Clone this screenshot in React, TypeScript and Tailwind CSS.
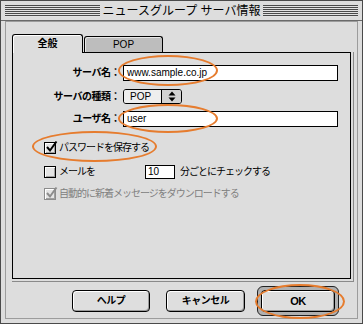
import React from 'react';

// Mac OS 8 風の「ニュースグループ サーバ情報」ダイアログ

const stripes =
  'flex-1 h-[12px] bg-[repeating-linear-gradient(to_bottom,#4a4a4a_0px,#4a4a4a_1px,#e2e2e2_1px,#e2e2e2_2px)]';

function CheckBox({ checked, disabled }: { checked?: boolean; disabled?: boolean }) {
  const stroke = disabled ? '#8c8c8c' : '#000';
  return (
    <span
      className={`relative shrink-0 w-[12px] h-[12px] border bg-[#e4e4e4] shadow-[inset_1px_1px_0_#fff,inset_-1px_-1px_0_#a0a0a0] ${
        disabled ? 'border-[#8c8c8c]' : 'border-black'
      }`}
    >
      {checked && (
        <svg className="absolute -top-[3px] left-[0px]" width="13" height="13" viewBox="0 0 13 13">
          <path d="M2 7 L5 10.5 L11.5 1.5" stroke={stroke} strokeWidth="2" fill="none" />
        </svg>
      )}
    </span>
  );
}

function Field({ label, children }: { label: string; children: React.ReactNode }) {
  return (
    <div className="flex items-center">
      <span className="w-[107px] text-right text-[10px] leading-none font-bold tracking-[-0.5px]">{label}</span>
      <div className="ml-[3px]">{children}</div>
    </div>
  );
}

function TextBox({ value }: { value: string }) {
  return (
    <div className="w-[215px] h-[16px] border border-black bg-white pl-[3px] flex items-center text-[10px] leading-none">
      {value}
    </div>
  );
}

function Button({ label, className = '' }: { label: string; className?: string }) {
  return (
    <div
      className={`h-[22px] border border-black rounded-[4px] bg-[#dedede] shadow-[inset_1px_1px_0_#fff,inset_-1px_-1px_0_#9a9a9a] flex items-center justify-center text-[10px] font-bold leading-none tracking-[-0.5px] ${className}`}
    >
      {label}
    </div>
  );
}

export default function App() {
  return (
    <div className="relative w-[363px] h-[324px] overflow-hidden bg-[#dddddd] border border-[#4a4a4a] flex flex-col text-black font-['Liberation_Sans','Noto_Sans_CJK_JP',sans-serif]">
      {/* タイトルバー */}
      <div className="shrink-0 h-[20px] flex items-center gap-[3px] px-[4px] border-b border-[#6a6a6a]">
        <div className={stripes} />
        <span className="text-[12px] leading-none">ニュースグループ サーバ情報</span>
        <div className={stripes} />
      </div>

      {/* 本体 */}
      <div className="flex-1 mx-[4px] mb-[4px] border border-[#9c9c9c] pl-[6px] pt-[12px] flex flex-col">
        {/* タブ */}
        <div className="flex items-end h-[18px]">
          <div className="relative z-10 -mb-[1px] w-[71px] h-[19px] border border-b-0 border-black rounded-t-[3px] bg-[#dddddd] shadow-[inset_1px_1px_0_#fff] flex items-center justify-center text-[10px] font-bold leading-none pb-[1px]">
            全般
          </div>
          <div className="ml-[1px] w-[79px] h-[16px] border border-b-0 border-black rounded-t-[3px] bg-[#bdbdbd] shadow-[inset_1px_1px_0_#e6e6e6] flex items-center justify-center text-[10px] leading-none">
            POP
          </div>
        </div>

        {/* パネル */}
        <div className="w-[342px] h-[230px] border-r border-b border-[#8a8a8a]">
          <div className="w-[339px] h-[227px] border border-black pt-[12px] flex flex-col">
            <Field label="サーバ名：">
              <TextBox value="www.sample.co.jp" />
            </Field>
            <div className="mt-[8px]">
              <Field label="サーバの種類：">
                <div className="w-[59px] h-[15px] border border-black rounded-[3px] flex overflow-hidden">
                  <div className="flex-1 bg-[#eeeeee] pl-[6px] flex items-center text-[10px] leading-none">POP</div>
                  <div className="w-[20px] border-l border-black bg-[#d2d2d2] flex items-center justify-center">
                    <svg width="8" height="11" viewBox="0 0 8 11">
                      <path d="M4 0.5 L7.5 4.5 L0.5 4.5 Z" fill="#000" />
                      <path d="M4 10.5 L7.5 6.5 L0.5 6.5 Z" fill="#000" />
                    </svg>
                  </div>
                </div>
              </Field>
            </div>
            <div className="mt-[7px]">
              <Field label="ユーザ名：">
                <TextBox value="user" />
              </Field>
            </div>

            {/* チェックボックス */}
            <div className="mt-[14px] pl-[31px] flex flex-col text-[10px] leading-none tracking-[-1px]">
              <div className="h-[14px] flex items-center">
                <CheckBox checked />
                <span className="ml-[3px]">パスワードを保存する</span>
              </div>
              <div className="mt-[10px] h-[14px] flex items-center">
                <CheckBox />
                <span className="ml-[3px] w-[86px]">メールを</span>
                <div className="w-[30px] h-[14px] border border-black bg-white pl-[2px] flex items-center tracking-normal">10</div>
                <span className="ml-[5px]">分ごとにチェックする</span>
              </div>
              <div className="mt-[8px] h-[14px] flex items-center text-[#808080]">
                <CheckBox checked disabled />
                <span className="ml-[3px]">自動的に新着メッセージをダウンロードする</span>
              </div>
            </div>
          </div>
        </div>

        {/* ボタン */}
        <div className="mt-[4px] h-[30px] pr-[18px] flex items-center justify-end">
          <Button label="ヘルプ" className="w-[78px]" />
          <Button label="キャンセル" className="w-[79px] ml-[16px]" />
          <div className="ml-[12px] w-[82px] h-[30px] border border-[#222] rounded-[6px] bg-[#b0b0b0] p-[3px]">
            <Button label="OK" className="w-full text-[11px]" />
          </div>
        </div>
      </div>

      {/* 注釈の楕円 */}
      <div className="pointer-events-none absolute left-[117px] top-[54px] w-[100px] h-[31px] rounded-[50%] border-2 border-[#e67c2e]" />
      <div className="pointer-events-none absolute left-[117px] top-[103px] w-[100px] h-[29px] rounded-[50%] border-2 border-[#e67c2e]" />
      <div className="pointer-events-none absolute left-[31px] top-[130px] w-[125px] h-[31px] rounded-[50%] border-2 border-[#e67c2e]" />
      <div className="pointer-events-none absolute left-[254px] top-[283px] w-[90px] h-[35px] rounded-[50%] border-2 border-[#e67c2e]" />
    </div>
  );
}
